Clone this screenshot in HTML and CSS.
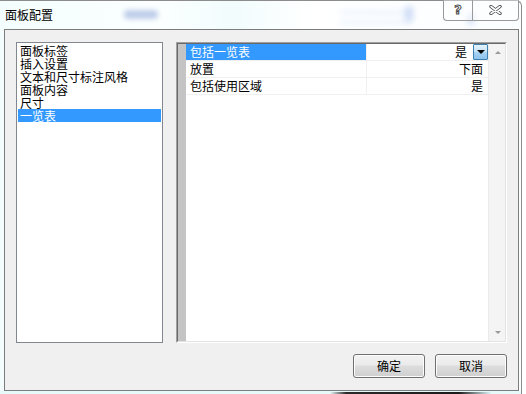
FILE: index.html
```html
<!DOCTYPE html>
<html lang="zh">
<head>
<meta charset="utf-8">
<title>面板配置</title>
<link rel="stylesheet" href="styles.css">
</head>
<body>
<div class="window">
  <div class="titlebar">
    <span class="title">面板配置</span>
    <span class="blur b1"></span>
    <span class="blur b2"></span>
    <span class="blur b3"></span>
    <span class="blur b4"></span>
    <span class="blur b5"></span>
    <div class="caption">
      <div class="cbtn help"><span class="q">?</span></div>
      <div class="cbtn close">
        <svg width="13" height="10" viewBox="0 0 13 10">
          <path d="M2 1.5 L11 8.5 M11 1.5 L2 8.5" stroke="#4a4a4a" stroke-width="3.4" stroke-linecap="round" fill="none"/>
          <path d="M2 1.5 L11 8.5 M11 1.5 L2 8.5" stroke="#ffffff" stroke-width="1.6" stroke-linecap="round" fill="none"/>
        </svg>
      </div>
    </div>
  </div>
  <div class="client">
    <div class="main">
      <ul class="list">
        <li>面板标签</li>
        <li>插入设置</li>
        <li>文本和尺寸标注风格</li>
        <li>面板内容</li>
        <li>尺寸</li>
        <li class="selected">一览表</li>
      </ul>
      <div class="grid">
        <div class="grid-inner">
          <div class="gutter"></div>
          <div class="rows">
            <div class="row">
              <div class="name sel">包括一览表</div>
              <div class="val first"><span>是</span><span class="dd"></span></div>
            </div>
            <div class="row">
              <div class="name">放置</div>
              <div class="val"><span>下面</span></div>
            </div>
            <div class="row">
              <div class="name">包括使用区域</div>
              <div class="val"><span>是</span></div>
            </div>
          </div>
          <div class="vscroll">
            <span class="arrow up"></span>
            <span class="arrow down"></span>
          </div>
        </div>
      </div>
    </div>
    <div class="buttons">
      <button class="btn">确定</button>
      <button class="btn">取消</button>
    </div>
  </div>
  <div class="bottom-edge"><span class="shadow"></span></div>
</div>
</body>
</html>
```
FILE: styles.css
```css
* { box-sizing: border-box; }
html, body {
  margin: 0;
  padding: 0;
  background: #ffffff;
}
body {
  width: 526px;
  height: 394px;
  overflow: hidden;
  font-family: "Noto Sans CJK SC", "Noto Sans", sans-serif;
  font-size: 12px;
  color: #000;
}
.window {
  position: relative;
  width: 522px;
  height: 394px;
  border-top: 1px solid #8c8c8c;
  border-right: 1px solid #8c8c8c;
  border-top-right-radius: 6px;
  background: linear-gradient(90deg, #f4fdfd 0%, #fbffff 30%, #f2fcfd 45%, #ffffff 60%, #fbfeff 100%);
}
.titlebar {
  position: relative;
  height: 28px;
}
.title {
  position: absolute;
  left: 5px;
  top: 7px;
  line-height: 14px;
  font-size: 12px;
}
.blur {
  position: absolute;
  filter: blur(3px);
  background: #a9c0ee;
  opacity: 0.55;
}
.b1 { left: 124px; top: 9px; width: 34px; height: 9px; border-radius: 4px; background: #8ea6d8; filter: blur(2.5px); }
.b2 { left: 340px; top: 10px; width: 70px; height: 3px; background: #d2e2fa; }
.b3 { left: 340px; top: 20px; width: 70px; height: 3px; background: #d2e2fa; }
.b4 { left: 405px; top: 5px; width: 8px; height: 16px; border-radius: 3px; }
.b5 { left: 468px; top: 12px; width: 6px; height: 12px; border-radius: 3px; }
.caption {
  position: absolute;
  left: 443px;
  top: -1px;
  display: flex;
  height: 21px;
}
.cbtn {
  height: 21px;
  border: 1px solid #9a9a9a;
  border-top: none;
  display: flex;
  align-items: center;
  justify-content: center;
  background: rgba(255,255,255,0.4);
}
.help {
  width: 29px;
  border-right: none;
  border-bottom-left-radius: 4px;
}
.close {
  width: 47px;
  border-bottom-right-radius: 4px;
}
.q {
  font-family: "DejaVu Sans", sans-serif;
  font-weight: bold;
  font-size: 13px;
  color: #fff;
  -webkit-text-stroke: 1px #4a4a4a;
  line-height: 13px;
  margin-top: -1px;
}
.client {
  margin-left: 4px;
  width: 515px;
  height: 362px;
  border: 1px solid #7c7c7c;
  background: #f0f0f0;
  padding: 12px 11px 0 11px;
}
.main {
  display: flex;
  gap: 13px;
  height: 301px;
}
.list {
  margin: 0;
  padding: 1px;
  list-style: none;
  width: 147px;
  height: 301px;
  border: 1px solid #828790;
  background: #fff;
}
.list li {
  height: 13px;
  line-height: 13px;
  padding-left: 2px;
  white-space: nowrap;
}
.list li.selected {
  background: #3399ff;
  color: #fff;
}
.grid {
  width: 331px;
  height: 301px;
  border: 1px solid;
  border-color: #a0a0a0 #ffffff #ffffff #a0a0a0;
  background: #fff;
}
.grid-inner {
  display: flex;
  height: 100%;
  border: 1px solid;
  border-color: #696969 #e3e3e3 #e3e3e3 #696969;
}
.gutter {
  width: 8px;
  background: #c4c4c4;
  flex: none;
}
.rows {
  width: 302px;
  flex: none;
}
.row {
  display: flex;
  height: 17px;
  border-bottom: 1px solid #f0f0f0;
}
.name {
  width: 181px;
  border-right: 1px solid #f0f0f0;
  padding-left: 4px;
  line-height: 16px;
  white-space: nowrap;
}
.name.sel {
  background: #3399ff;
  color: #fff;
}
.val {
  width: 121px;
  display: flex;
  justify-content: flex-end;
  align-items: center;
  padding-right: 5px;
  line-height: 16px;
}
.val.first {
  padding-right: 0;
  gap: 6px;
}
.dd {
  position: relative;
  width: 15px;
  height: 16px;
  border: 1px solid #3c7fb1;
  border-radius: 1px;
  background: linear-gradient(#e5f3fd 0%, #c4e2f8 50%, #a9d4f4 51%, #8cc2ec 100%);
}
.dd::after {
  content: "";
  position: absolute;
  left: 3px;
  top: 5px;
  border-left: 4px solid transparent;
  border-right: 4px solid transparent;
  border-top: 4px solid #000;
}
.vscroll {
  position: relative;
  width: 17px;
  flex: none;
  background: #f4f4f4;
  border-left: 1px solid #eaeaea;
}
.arrow {
  position: absolute;
  left: 6px;
  border-left: 3px solid transparent;
  border-right: 3px solid transparent;
}
.arrow.up {
  top: 7px;
  border-bottom: 3px solid #9a9a9a;
}
.arrow.down {
  bottom: 7px;
  border-top: 3px solid #9a9a9a;
}
.buttons {
  display: flex;
  justify-content: flex-end;
  gap: 10px;
  margin-top: 11px;
}
.btn {
  width: 72px;
  height: 24px;
  border: 1px solid #707070;
  border-radius: 3px;
  background: linear-gradient(#f2f2f2 0%, #ebebeb 45%, #dddddd 50%, #cfcfcf 100%);
  font-family: "Noto Sans CJK SC", sans-serif;
  font-size: 12px;
  color: #000;
  padding: 0;
  line-height: 20px;
  box-shadow: inset 0 0 0 1px #fcfcfc;
}
.bottom-edge {
  position: relative;
  height: 3px;
  background: #e6fafa;
}
.shadow {
  position: absolute;
  left: 330px;
  right: 30px;
  top: 1px;
  height: 2px;
  background: linear-gradient(90deg, rgba(40,40,40,0) 0%, #2a2a2a 10%, #1a1a1a 80%, rgba(200,240,250,0.3) 100%);
}
```
